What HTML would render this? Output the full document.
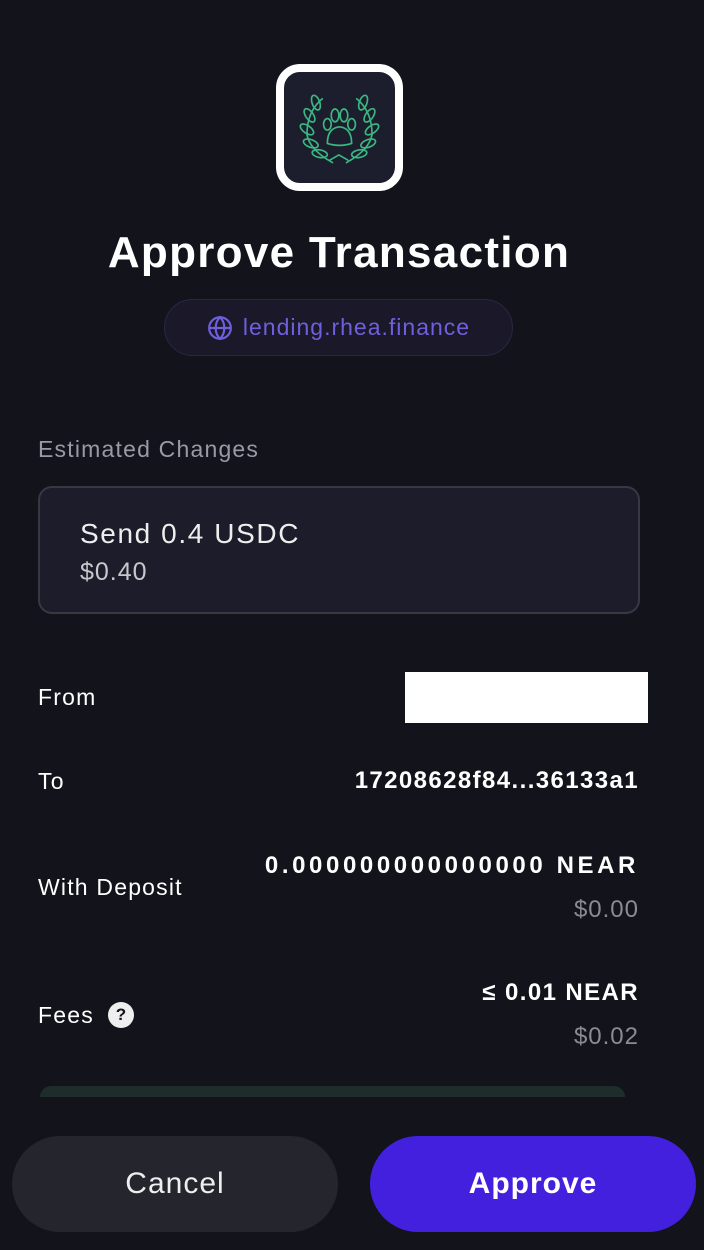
<!DOCTYPE html>
<html><head><meta charset="utf-8"><style>
*{margin:0;padding:0;box-sizing:border-box}
body{width:704px;height:1250px;background:#12131b;font-family:"Liberation Sans",sans-serif;color:#fff;position:relative;overflow:hidden;letter-spacing:1px}
.a{position:absolute}
.logo{left:276px;top:64px;width:127px;height:127px;border:8px solid #fff;border-radius:24px;background:#1c1e2e}
h1{position:absolute;left:0;width:678px;top:228px;text-align:center;font-size:44px;font-weight:bold;letter-spacing:1.3px}
.chip{left:164px;top:299px;width:349px;height:57px;border-radius:29px;background:#1a1829;border:1px solid #2a2745;color:#6e60dc;font-size:23px;display:flex;align-items:center;justify-content:center;gap:10px}
.lbl{font-size:23px;left:38px;letter-spacing:1.2px}
.r{right:65px;text-align:right;font-size:24px;font-weight:bold;letter-spacing:1.4px}
.g{color:#8b8b94;font-weight:normal;letter-spacing:1px}
</style></head><body>
<div class="a logo">
<svg width="111" height="111" viewBox="12 16 87 87" fill="none" stroke="#3fc88a" stroke-width="1.3" stroke-linecap="round">
<g opacity=".9">
<path d="M42 37 q-12 10 -12 28 q2 12 20 22"/><path d="M69 37 q12 10 12 28 q-2 12 -20 22"/>
<ellipse cx="37" cy="40" rx="3" ry="6" transform="rotate(-20 37 40)"/><ellipse cx="32" cy="50" rx="3" ry="6" transform="rotate(-35 32 50)"/><ellipse cx="30" cy="61" rx="3" ry="6" transform="rotate(-55 30 61)"/><ellipse cx="33" cy="72" rx="3" ry="6" transform="rotate(-70 33 72)"/><ellipse cx="40" cy="80" rx="3" ry="6" transform="rotate(-80 40 80)"/>
<ellipse cx="74" cy="40" rx="3" ry="6" transform="rotate(20 74 40)"/><ellipse cx="79" cy="50" rx="3" ry="6" transform="rotate(35 79 50)"/><ellipse cx="81" cy="61" rx="3" ry="6" transform="rotate(55 81 61)"/><ellipse cx="78" cy="72" rx="3" ry="6" transform="rotate(70 78 72)"/><ellipse cx="71" cy="80" rx="3" ry="6" transform="rotate(80 71 80)"/>
<path d="M46 72 q0 -12 9.5 -13 q9.5 1 9.5 13 q-9.5 3 -19 0z"/>
<ellipse cx="46" cy="57" rx="3" ry="4.5"/><ellipse cx="52" cy="50" rx="3" ry="5"/><ellipse cx="59" cy="50" rx="3" ry="5"/><ellipse cx="65" cy="57" rx="3" ry="4.5"/>
<path d="M48 85 l7 -4 l7 4"/></g></svg>
</div>
<h1>Approve Transaction</h1>
<div class="a chip"><svg width="26" height="26" viewBox="0 0 24 24" fill="none" stroke="#6e60dc" stroke-width="2"><circle cx="12" cy="12" r="10"/><path d="M2 12h20M12 2c3 3 4 6.5 4 10s-1 7-4 10c-3-3-4-6.5-4-10s1-7 4-10z"/></svg>lending.rhea.finance</div>
<div class="a lbl" style="top:436px;color:#9a9aa5">Estimated Changes</div>
<div class="a" style="left:38px;top:486px;width:602px;height:128px;background:#1c1c2a;border:2px solid #383842;border-radius:14px"></div>
<div class="a" style="left:80px;top:518px;font-size:28px;color:#eee;letter-spacing:1.6px">Send 0.4 USDC</div>
<div class="a" style="left:80px;top:558px;font-size:25px;color:#c8c8cc">$0.40</div>
<div class="a lbl" style="top:684px">From</div>
<div class="a" style="left:405px;top:672px;width:243px;height:51px;background:#fff"></div>
<div class="a lbl" style="top:768px">To</div>
<div class="a r" style="top:767px">17208628f84...36133a1</div>
<div class="a lbl" style="top:874px">With Deposit</div>
<div class="a r" style="top:852px;letter-spacing:3.6px">0.000000000000000 NEAR</div>
<div class="a r g" style="top:896px">$0.00</div>
<div class="a lbl" style="top:1002px">Fees</div>
<div class="a" style="left:108px;top:1002px;width:26px;height:26px;border-radius:50%;background:#eee;color:#12131b;font-size:17px;font-weight:bold;text-align:center;line-height:26px;letter-spacing:0">?</div>
<div class="a r" style="top:979px">≤ 0.01 NEAR</div>
<div class="a r g" style="top:1023px">$0.02</div>
<div class="a" style="left:40px;top:1086px;width:585px;height:11px;background:#1f2d2a;border-radius:30px 30px 0 0"></div>
<div class="a" style="left:12px;top:1136px;width:326px;height:96px;border-radius:48px;background:#25252e;color:#eee;font-size:30px;text-align:center;line-height:96px">Cancel</div>
<div class="a" style="left:370px;top:1136px;width:326px;height:96px;border-radius:48px;background:#4320dd;color:#fff;font-size:30px;font-weight:bold;text-align:center;line-height:96px">Approve</div>
</body></html>
